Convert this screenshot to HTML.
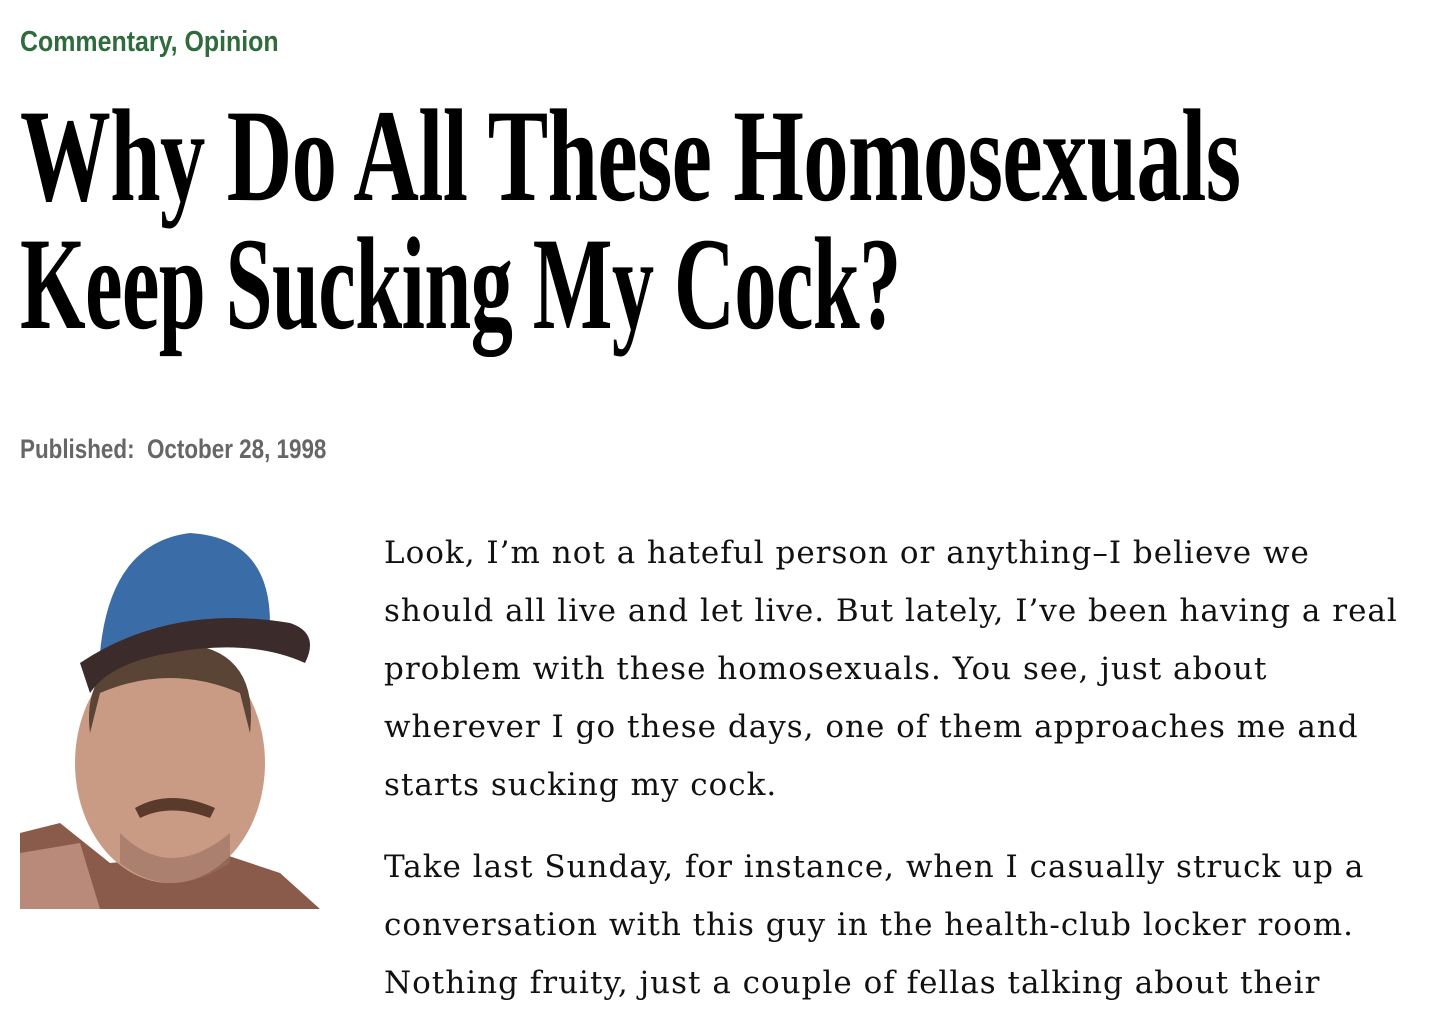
<!DOCTYPE html>
<html><head><meta charset="utf-8"><style>
html,body{margin:0;padding:0;background:#fff;width:1448px;height:1014px;overflow:hidden}
.abs{position:absolute;white-space:nowrap}
.cat{left:20px;top:26px;font:bold 29px "Liberation Sans",sans-serif;color:#2f6b3c;transform:scaleX(0.86);transform-origin:left}
.t{left:20px;font:bold 132px/1 "Liberation Serif",serif;color:#000;transform-origin:left;letter-spacing:-1px}
.pub{left:20px;top:434px;font:bold 27px "Liberation Sans",sans-serif;color:#666;transform:scaleX(0.83);transform-origin:left}
.body{left:384px;top:524px;width:1060px;font:31px/58px "DejaVu Serif",serif;color:#111;letter-spacing:1px}
.body p{margin:0 0 24px 0}
</style></head><body>
<div class="abs cat">Commentary, Opinion</div>
<div class="abs t" style="top:90px;transform:scaleX(0.688)">Why Do All These Homosexuals</div>
<div class="abs t" style="top:218px;transform:scaleX(0.64)">Keep Sucking My Cock?</div>
<div class="abs pub">Published:&nbsp; October 28, 1998</div>
<svg class="abs" style="left:20px;top:533px" width="300" height="376" viewBox="0 0 300 376">
<rect width="300" height="376" fill="#fff"/>
<path d="M0 300 L40 290 L90 330 L200 320 L260 340 L300 376 L0 376Z" fill="#8a5a4a"/>
<path d="M0 320 L60 310 L80 376 L0 376Z" fill="#b98a7a"/>
<ellipse cx="150" cy="230" rx="95" ry="120" fill="#c99a84"/>
<path d="M70 200 Q60 120 150 110 Q240 110 230 200 L220 160 Q150 130 80 160Z" fill="#5a4436"/>
<path d="M80 120 Q90 10 170 0 Q250 5 250 90 L230 110 Q150 95 80 130Z" fill="#3a6da8"/>
<path d="M60 130 Q150 70 270 90 Q300 100 285 130 Q230 105 150 120 Q90 130 70 160Z" fill="#3b2b2b"/>
<path d="M115 275 Q150 255 195 275 L190 285 Q150 270 120 285Z" fill="#5a3a2a"/>
<path d="M100 300 Q150 350 210 300 L210 330 Q150 370 100 330Z" fill="#9a7060" opacity=".6"/>
</svg>
<div class="abs body">
<p>Look, I’m not a hateful person or anything–I believe we<br>should all live and let live. But lately, I’ve been having a real<br>problem with these homosexuals. You see, just about<br>wherever I go these days, one of them approaches me and<br>starts sucking my cock.</p>
<p>Take last Sunday, for instance, when I casually struck up a<br>conversation with this guy in the health-club locker room.<br>Nothing fruity, just a couple of fellas talking about their</p>
</div>
</body></html>
